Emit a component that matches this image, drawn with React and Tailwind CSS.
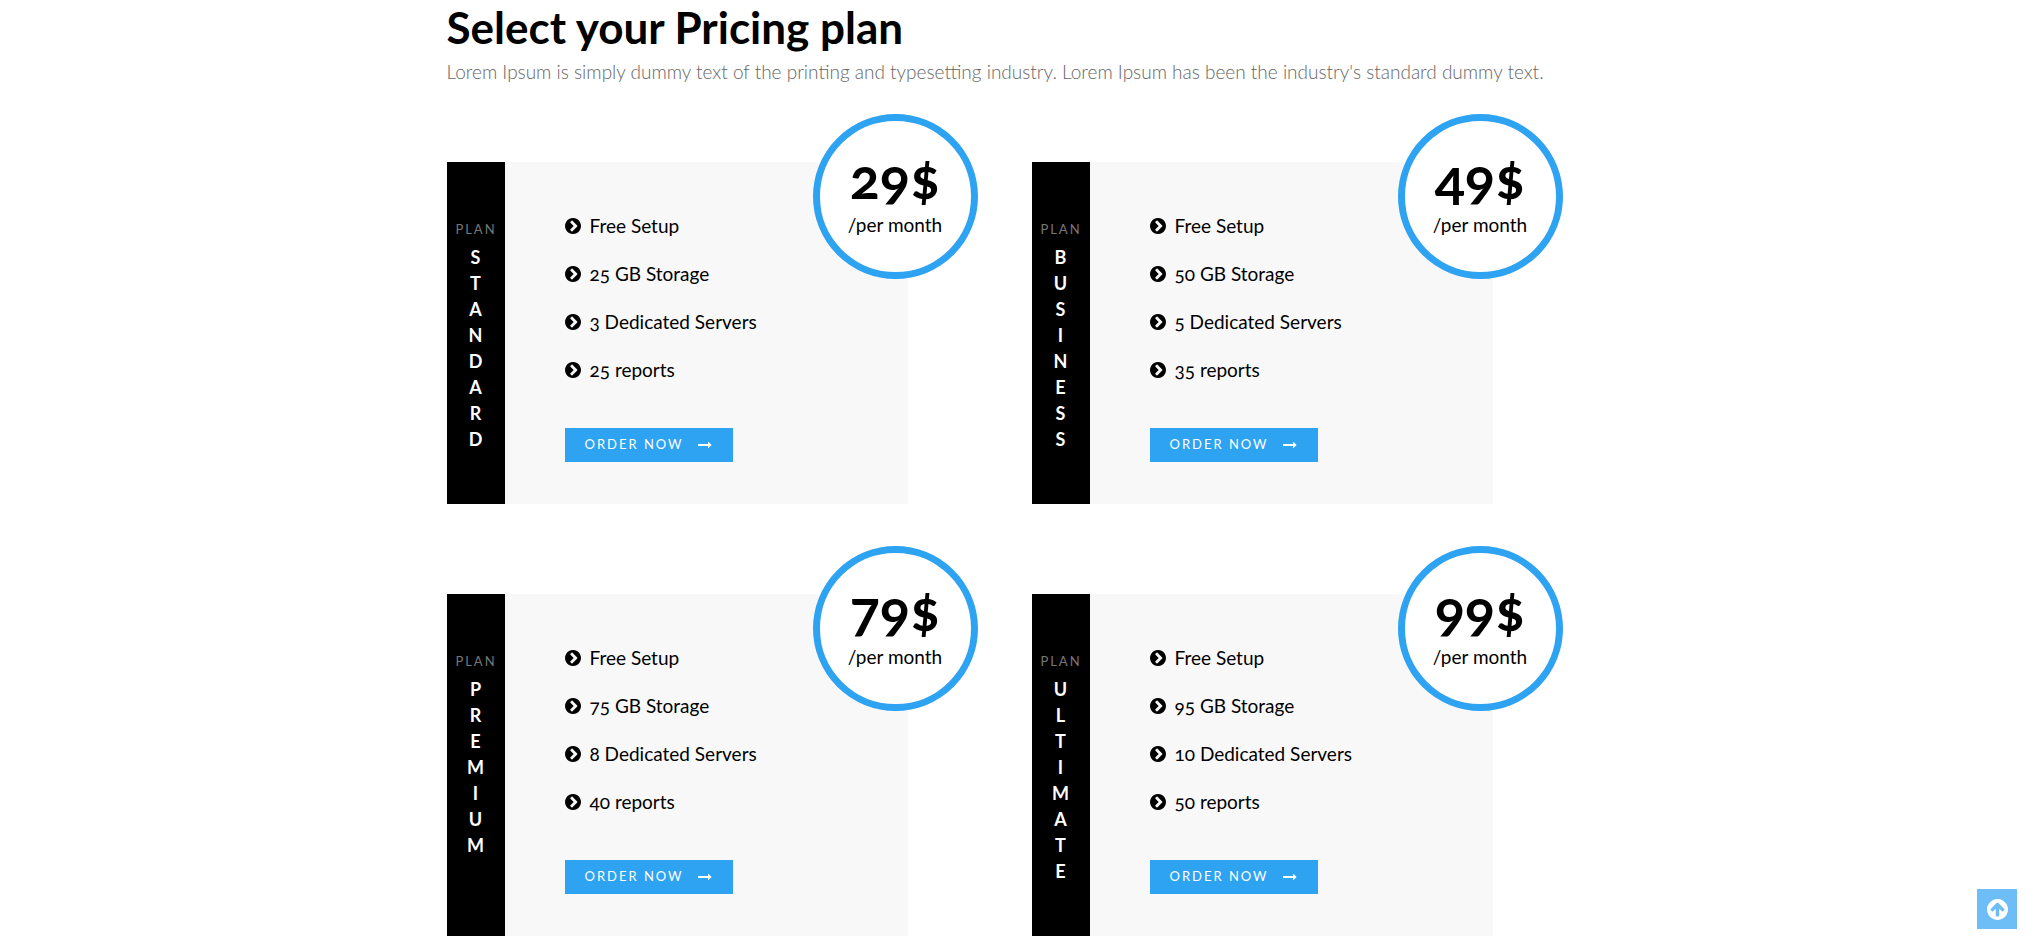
import React from 'react';

const plans = [
  { name: 'STANDARD', price: 29, features: ['Free Setup', '25 GB Storage', '3 Dedicated Servers', '25 reports'] },
  { name: 'BUSINESS', price: 49, features: ['Free Setup', '50 GB Storage', '5 Dedicated Servers', '35 reports'] },
  { name: 'PREMIUM', price: 79, features: ['Free Setup', '75 GB Storage', '8 Dedicated Servers', '40 reports'] },
  { name: 'ULTIMATE', price: 99, features: ['Free Setup', '95 GB Storage', '10 Dedicated Servers', '50 reports'] },
];

const ChevronCircle = () => (
  <svg viewBox="128 128 1536 1536" className="w-4 h-4 shrink-0" fill="currentColor" aria-hidden="true">
    <path d="M845 1395l454-454q19-19 19-45t-19-45l-454-454q-19-19-45-19t-45 19l-102 102q-19 19-19 45t19 45l307 307-307 307q-19 19-19 45t19 45l102 102q19 19 45 19t45-19zm819-499q0 209-103 385.5t-279.5 279.5-385.5 103-385.5-103-279.5-279.5-103-385.5 103-385.5 279.5-279.5 385.5-103 385.5 103 279.5 279.5 103 385.5z" />
  </svg>
);

const LongArrow = () => (
  <svg viewBox="0 0 1792 1792" className="w-[14px] h-[14px]" fill="currentColor" aria-hidden="true">
    <path d="M1728 893q0 14-10 24l-384 354q-16 14-35 6-19-9-19-29v-224h-1248q-14 0-23-9t-9-23v-192q0-14 9-23t23-9h1248v-224q0-21 19-29t35 5l384 350q10 10 10 23z" />
  </svg>
);

const ArrowCircleUp = () => (
  <svg viewBox="128 128 1536 1536" className="w-[21px] h-[21px]" fill="currentColor" aria-hidden="true">
    <path d="M1412 896q0-27-18-45l-362-362-91-91q-18-18-45-18t-45 18l-91 91-362 362q-18 18-18 45t18 45l91 91q18 18 45 18t45-18l189-189v502q0 26 19 45t45 19h128q26 0 45-19t19-45v-502l189 189q19 19 45 19t45-19l91-91q18-18 18-45zm252 0q0 209-103 385.5t-279.5 279.5-385.5 103-385.5-103-279.5-279.5-103-385.5 103-385.5 279.5-279.5 385.5-103 385.5 103 279.5 279.5 103 385.5z" />
  </svg>
);

const PlanCard = ({ plan }) => (
  <article className="relative flex mr-[94px] bg-[#f8f8f8]">
    <h2 className="w-[58px] shrink-0 bg-black pt-[54px] pb-[52px] flex flex-col items-center text-white">
      <span className="text-[13px] leading-[26px] font-normal tracking-[2px] text-[#777] pl-px">PLAN</span>
      <span className="flex flex-col items-center pt-[2px] text-lg leading-[26px] font-bold">
        {plan.name.split('').map((letter, i) => (
          <span key={i}>{letter}</span>
        ))}
      </span>
    </h2>

    <div className="pl-[60px] pt-10 pb-[42px]">
      <ul className="text-black">
        {plan.features.map((feature) => (
          <li key={feature} className="flex items-center gap-[9px] h-12 text-[19px]">
            <ChevronCircle />
            {feature}
          </li>
        ))}
      </ul>
      <button
        type="button"
        className="mt-[34px] h-[34px] w-[168px] flex items-center justify-between pl-5 pr-[21px] bg-[#2ea3f2] text-white text-[13px] tracking-[2px]"
      >
        ORDER NOW
        <LongArrow />
      </button>
    </div>

    <div className="absolute -top-12 -right-[70px] w-[165px] h-[165px] rounded-full border-[7px] border-[#2ea3f2] bg-white flex flex-col items-center pt-[30px] text-black">
      <span className="text-[56px] leading-[54px] font-bold">{plan.price}$</span>
      <span className="pt-1 text-[19px] leading-8">/per month</span>
    </div>
  </article>
);

const App = () => {
  const scrollToTop = () => window.scrollTo({ top: 0, behavior: 'smooth' });

  return (
    <div className="bg-white font-['Lato',sans-serif] oldstyle-nums">
      <main className="max-w-[1170px] mx-auto px-[15px]">
        <h1 className="text-[44px] leading-[54px] font-bold text-black">Select your Pricing plan</h1>
        <p className="text-[19px] leading-9 font-light text-[#666]">
          Lorem Ipsum is simply dummy text of the printing and typesetting industry. Lorem Ipsum has been the industry's
          standard dummy text.
        </p>

        <section className="mt-[72px] grid grid-cols-2 gap-x-[30px] gap-y-[90px]">
          {plans.map((plan) => (
            <PlanCard key={plan.name} plan={plan} />
          ))}
        </section>
      </main>

      <button
        type="button"
        aria-label="Back to top"
        onClick={scrollToTop}
        className="fixed right-4 bottom-[10px] w-10 h-10 flex items-center justify-center bg-[#6dbef6] text-white"
      >
        <ArrowCircleUp />
      </button>
    </div>
  );
};

export default App;
